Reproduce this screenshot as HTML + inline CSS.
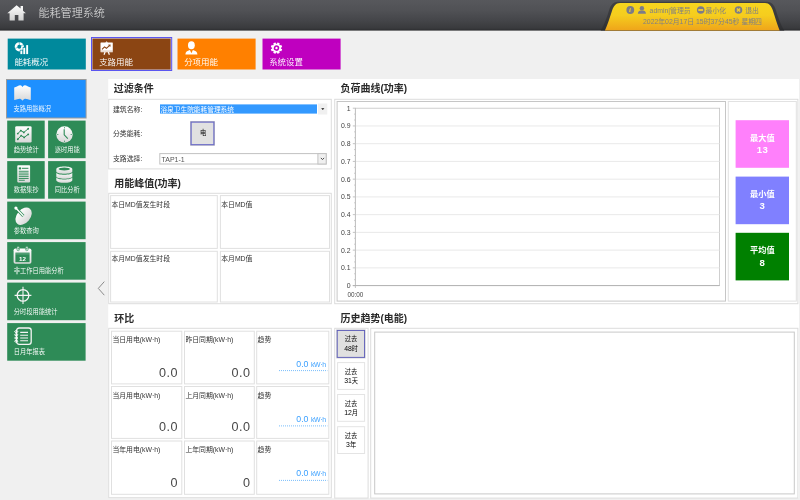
<!DOCTYPE html>
<html lang="zh-CN">
<head>
<meta charset="utf-8">
<title>能耗管理系统</title>
<style>
*{margin:0;padding:0;box-sizing:border-box;}
html,body{width:800px;height:500px;overflow:hidden;background:#f0f0f0;}
body{font-family:"Liberation Sans","Noto Sans CJK SC",sans-serif;color:#333;position:relative;}
#root{position:absolute;left:0;top:0;width:800px;height:500px;will-change:transform;}
.abs{position:absolute;}
.t{position:absolute;white-space:nowrap;line-height:1;}
/* header */
#hdr{left:0;top:0;width:800px;height:30.6px;background:linear-gradient(#57585c 0%,#505155 35%,#45464a 65%,#393a3d 92%,#2b2c2e 100%);}
#title{left:38.4px;top:8.3px;font-size:11.1px;color:#e4e4e4;font-weight:300;}
.ut{font-size:6.875px;color:#7f7f86;}
/* top tiles */
.tile{position:absolute;top:38.6px;width:78.1px;height:30.9px;color:#fff;}
.tile .t{left:6.7px;top:19.2px;font-size:8.45px;color:#fff;font-weight:350;}
.tile svg{position:absolute;left:6px;top:2.6px;}
/* sidebar */
.sb{position:absolute;background:#2e8b57;color:#fff;}
.sb .t{font-size:6.25px;color:#fff;left:6.6px;font-weight:350;}
.sb svg{position:absolute;}
/* panels */
#main{left:108.2px;top:79px;width:690.8px;height:419.2px;background:#fff;}
.h{font-size:10px;font-weight:bold;color:#2a2a2a;}
.grp{position:absolute;border:1px solid #e5e5e5;background:#fff;}
.box{position:absolute;border:1px solid #e9e9e9;background:#fff;}
.lbl{font-size:6.875px;color:#333;}
.big{font-size:12.6px;color:#484848;text-align:right;}
.blue{color:#3ba0ff;}
.btn{position:absolute;border:1px solid #ececec;background:#fff;font-size:6.25px;color:#222;text-align:center;line-height:10.2px;}
.ax{font-size:6.25px;color:#555;text-align:right;width:12px;}
</style>
</head>
<body>
<div id="root">
<svg class="abs" style="left:0;top:0" width="800" height="500" viewBox="0 0 800 500"><defs><linearGradient id="hdg" x1="0" y1="0" x2="0" y2="1"><stop offset="0" stop-color="#57585c"/><stop offset=".35" stop-color="#505155"/><stop offset=".65" stop-color="#45464a"/><stop offset=".92" stop-color="#393a3d"/><stop offset="1" stop-color="#2b2c2e"/></linearGradient></defs>
<rect x="0" y="0" width="800" height="30.6" fill="url(#hdg)"/>
<rect x="7.70" y="38.60" width="78.10" height="30.90" fill="#00899c"/>
<rect x="91.50" y="37.50" width="80.20" height="33.00" fill="#cfc8e8" stroke="#5a55f0" stroke-width="1"/>
<rect x="92.50" y="38.60" width="78.10" height="30.90" fill="#8b4513"/>
<rect x="177.50" y="38.60" width="78.10" height="30.90" fill="#ff8000"/>
<rect x="262.50" y="38.60" width="78.10" height="30.90" fill="#bf00bf"/>
<rect x="6.00" y="79.00" width="80.60" height="39.50" fill="#9a9a9a"/>
<rect x="7.00" y="80.00" width="78.60" height="37.50" fill="#1e90ff"/>
<rect x="7.20" y="120.60" width="37.50" height="37.60" fill="#2e8b57"/>
<rect x="48.10" y="120.60" width="37.50" height="37.60" fill="#2e8b57"/>
<rect x="7.20" y="161.10" width="37.50" height="37.60" fill="#2e8b57"/>
<rect x="48.10" y="161.10" width="37.50" height="37.60" fill="#2e8b57"/>
<rect x="7.20" y="201.60" width="78.40" height="37.60" fill="#2e8b57"/>
<rect x="7.20" y="242.10" width="78.40" height="37.60" fill="#2e8b57"/>
<rect x="7.20" y="282.60" width="78.40" height="37.60" fill="#2e8b57"/>
<rect x="7.20" y="323.10" width="78.40" height="37.60" fill="#2e8b57"/>
<rect x="108.2" y="79" width="690.8" height="419.2" fill="#fff"/>
<rect x="108.70" y="99.30" width="222.60" height="69.60" fill="#fff" stroke="#dcdcdc" stroke-width="1"/>
<rect x="160.00" y="104.40" width="157.00" height="9.20" fill="#3399ff"/>
<rect x="318.00" y="103.50" width="9.30" height="11.00" fill="#f0f0f0"/>
<rect x="190.10" y="121.10" width="24.80" height="24.60" fill="#b4b4c0"/>
<rect x="190.60" y="121.60" width="23.80" height="23.60" fill="#6c6cc8"/>
<rect x="191.70" y="122.70" width="21.60" height="21.40" fill="#e1e1e1"/>
<rect x="159.80" y="153.60" width="166.40" height="10.40" fill="#fff" stroke="#c2c2c2" stroke-width="1"/>
<rect x="317.90" y="153.60" width="8.30" height="10.40" fill="#f0f0f0" stroke="#c2c2c2" stroke-width="1"/>
<rect x="108.70" y="193.30" width="222.60" height="110.40" fill="#fff" stroke="#dcdcdc" stroke-width="1"/>
<rect x="110.60" y="195.60" width="106.70" height="52.80" fill="#fff" stroke="#e0e0e0" stroke-width="1"/>
<rect x="220.40" y="195.60" width="109.10" height="52.80" fill="#fff" stroke="#e0e0e0" stroke-width="1"/>
<rect x="110.60" y="251.30" width="106.70" height="50.70" fill="#fff" stroke="#e0e0e0" stroke-width="1"/>
<rect x="220.40" y="251.30" width="109.10" height="50.70" fill="#fff" stroke="#e0e0e0" stroke-width="1"/>
<rect x="108.70" y="328.30" width="222.60" height="169.40" fill="#fff" stroke="#dcdcdc" stroke-width="1"/>
<rect x="111.50" y="331.20" width="70.30" height="52.70" fill="#fff" stroke="#e0e0e0" stroke-width="1"/>
<rect x="184.50" y="331.20" width="69.80" height="52.70" fill="#fff" stroke="#e0e0e0" stroke-width="1"/>
<rect x="256.70" y="331.20" width="72.10" height="52.70" fill="#fff" stroke="#e0e0e0" stroke-width="1"/>
<path d="M279.00 370.60 L327.40 370.60" stroke="#79bdfb" stroke-width="1" stroke-dasharray="1 1" fill="none"/>
<rect x="111.50" y="386.50" width="70.30" height="51.90" fill="#fff" stroke="#e0e0e0" stroke-width="1"/>
<rect x="184.50" y="386.50" width="69.80" height="51.90" fill="#fff" stroke="#e0e0e0" stroke-width="1"/>
<rect x="256.70" y="386.50" width="72.10" height="51.90" fill="#fff" stroke="#e0e0e0" stroke-width="1"/>
<path d="M279.00 425.90 L327.40 425.90" stroke="#79bdfb" stroke-width="1" stroke-dasharray="1 1" fill="none"/>
<rect x="111.50" y="441.00" width="70.30" height="53.30" fill="#fff" stroke="#e0e0e0" stroke-width="1"/>
<rect x="184.50" y="441.00" width="69.80" height="53.30" fill="#fff" stroke="#e0e0e0" stroke-width="1"/>
<rect x="256.70" y="441.00" width="72.10" height="53.30" fill="#fff" stroke="#e0e0e0" stroke-width="1"/>
<path d="M279.00 480.40 L327.40 480.40" stroke="#79bdfb" stroke-width="1" stroke-dasharray="1 1" fill="none"/>
<rect x="334.70" y="99.30" width="463.20" height="204.40" fill="#fff" stroke="#dcdcdc" stroke-width="1"/>
<rect x="337.10" y="101.50" width="388.40" height="199.60" fill="#fff" stroke="#c6c6c6" stroke-width="1"/>
<rect x="728.30" y="101.50" width="68.00" height="199.60" fill="#fff" stroke="#e2e2e2" stroke-width="1"/>
<rect x="735.60" y="120.20" width="53.40" height="47.60" fill="#ff80fb"/>
<rect x="735.60" y="176.60" width="53.40" height="47.60" fill="#8080ff"/>
<rect x="735.60" y="232.80" width="53.40" height="47.60" fill="#008000"/>
<rect x="334.70" y="328.30" width="33.40" height="169.80" fill="#fff" stroke="#dcdcdc" stroke-width="1"/>
<rect x="370.70" y="328.30" width="427.20" height="169.80" fill="#fff" stroke="#dcdcdc" stroke-width="1"/>
<rect x="374.70" y="332.10" width="419.60" height="161.80" fill="#fff" stroke="#c8c8c8" stroke-width="1"/>
<rect x="336.20" y="329.40" width="29.40" height="29.00" fill="#c8c8d0"/>
<rect x="336.80" y="330.00" width="28.20" height="27.80" fill="#5c5cb8"/>
<rect x="337.70" y="330.90" width="26.40" height="26.00" fill="#e0e0e0"/>
<rect x="337.60" y="362.60" width="27.00" height="26.80" fill="#fff" stroke="#e4e4e4" stroke-width="1"/>
<rect x="337.60" y="394.50" width="27.00" height="26.80" fill="#fff" stroke="#e4e4e4" stroke-width="1"/>
<rect x="337.60" y="426.70" width="27.00" height="26.80" fill="#fff" stroke="#e4e4e4" stroke-width="1"/>
</svg>
<!-- HEADER -->
<svg class="abs" style="left:6px;top:4px" width="22" height="18" viewBox="0 0 22 18">
  <defs><linearGradient id="hg" x1="0" y1="0" x2="0" y2="1"><stop offset="0" stop-color="#ffffff"/><stop offset="1" stop-color="#d0d0d0"/></linearGradient></defs>
  <path d="M1.3 9.2 L10.6 1.2 L14.6 4.6 L14.6 2 L17 2 L17 6.7 L19.9 9.2 L17.6 9.2 L17.6 16.5 L12.4 16.5 L12.4 11 L8.8 11 L8.8 16.5 L3.6 16.5 L3.6 9.2 Z" fill="url(#hg)"/>
</svg>
<div id="title" class="t">能耗管理系统</div>
<!-- user tab -->
<svg class="abs" style="left:596px;top:0" width="190" height="31" viewBox="0 0 190 31">
  <defs>
    <linearGradient id="yg" x1="0" y1="0" x2="0" y2="1"><stop offset="0" stop-color="#f7d51e"/><stop offset="0.45" stop-color="#f5cd1e"/><stop offset="1" stop-color="#efa41a"/></linearGradient>
  </defs>
  <path d="M4.5 31 C9 24 11.6 15 13.2 10 C14.6 5.6 17 1.8 22 1.8 L171 1.8 C176 1.8 178.4 5.6 179.8 10 C181.4 15 184 24 188.5 31 Z" fill="#28282a" opacity=".5"/>
  <path d="M8.9 30.6 C12 24 14.6 15 16.2 10.2 C17.6 6.2 19.6 2.9 24 2.9 L169 2.9 C173.4 2.9 175.4 6.2 176.8 10.2 C178.4 15 181 24 183.7 30.6 Z" fill="url(#yg)"/>
  <!-- info icon -->
  <circle cx="34.3" cy="10" r="3.9" fill="#7c7c88"/>
  <text x="33.1" y="12.4" font-family="Liberation Serif,serif" font-style="italic" font-weight="bold" font-size="7" fill="#f5d030">i</text>
  <!-- user icon -->
  <circle cx="45.9" cy="8.3" r="2.2" fill="#7c7c88"/>
  <path d="M41.9 13.8 C41.9 11 44 10.6 45.9 10.6 C47.8 10.6 49.9 11 49.9 13.8 Z" fill="#7c7c88"/>
  <!-- minimize icon -->
  <circle cx="104.7" cy="10" r="3.8" fill="#7c7c88"/>
  <rect x="102.3" y="9.1" width="4.8" height="1.8" fill="#f5d030"/>
  <!-- exit icon -->
  <circle cx="142.5" cy="10" r="3.8" fill="#7c7c88"/>
  <path d="M140.9 8.4 L144.1 11.6 M144.1 8.4 L140.9 11.6" stroke="#f5d030" stroke-width="1.4"/>
</svg>
<div class="t ut" style="left:649.6px;top:7.5px">admin|管理员</div>
<div class="t ut" style="left:705.6px;top:7.5px">最小化</div>
<div class="t ut" style="left:745.2px;top:7.5px">退出</div>
<div class="t ut" style="left:643px;top:18.7px">2022年02月17日 15时37分45秒 星期四</div>
<!-- TOP TILES -->
<div class="tile" style="left:7.7px;background:#00899c;background:none">
  <svg width="16" height="14" viewBox="0 0 16 14"><circle cx="5.3" cy="5.8" r="3.3" fill="none" stroke="#fff" stroke-width="2.6"/><path d="M5.3 5.8 L5.3 .8 M5.3 5.8 L.6 7.6 M5.3 5.8 L9.8 3.4" stroke="#00899c" stroke-width=".5"/><g fill="#00899c"><rect x="5.8" y="8.8" width="3.1" height="5"/><rect x="8.7" y="6.1" width="3.1" height="7.5"/><rect x="11.6" y="3.4" width="3.1" height="10"/></g><g fill="#fff"><rect x="6.4" y="9.5" width="1.9" height="3.6"/><rect x="9.3" y="6.8" width="1.9" height="6.3"/><rect x="12.2" y="4.1" width="1.9" height="9"/></g></svg>
  <div class="t">能耗概况</div>
</div>
<div class="tile" style="left:92.5px;background:#8b4513;background:none">
  <svg width="16" height="15" viewBox="0 0 16 15"><rect x="1.5" y="1.6" width="12.3" height="9.7" rx=".5" fill="#fff"/><path d="M6.2 1.8 L7.6 .3 L9 1.8Z" fill="#fff"/><path d="M1.5 10.1 L13.8 10.1" stroke="#8b4513" stroke-width=".5" opacity=".7"/><path d="M6.1 11 L5 13.7 M9.3 11 L10.4 13.7" stroke="#fff" stroke-width="1.2" fill="none"/><path d="M3 8.4 L5.5 5.9 L7.4 7.3 L10.4 4.6" stroke="#8b4513" stroke-width="1.1" fill="none"/><path d="M8.9 3.7 L11.6 3.4 L11.3 6.1Z" fill="#8b4513"/></svg>
  <div class="t">支路用能</div>
</div>
<div class="tile" style="left:177.5px;background:#ff8000;background:none">
  <svg width="16" height="15" viewBox="0 0 16 15"><ellipse cx="7.4" cy="4.3" rx="3.4" ry="4" fill="#fff"/><path d="M1.4 13.5 C1.4 10.8 3.2 10.2 5.9 9.1 L7.4 12.2 L8.9 9.1 C11.6 10.2 13.4 10.8 13.4 13.5 Z" fill="#fff"/></svg>
  <div class="t">分项用能</div>
</div>
<div class="tile" style="left:262.5px;background:#bf00bf;background:none">
  <svg width="16" height="15" viewBox="0 0 16 15"><g transform="translate(7.5,7.1) rotate(22.5)"><g fill="#fff"><rect x="-1.25" y="-5.7" width="2.5" height="11.4" rx=".4"/><rect x="-1.25" y="-5.7" width="2.5" height="11.4" rx=".4" transform="rotate(45)"/><rect x="-1.25" y="-5.7" width="2.5" height="11.4" rx=".4" transform="rotate(90)"/><rect x="-1.25" y="-5.7" width="2.5" height="11.4" rx=".4" transform="rotate(135)"/><circle r="4.4"/></g><circle r="2.7" fill="#bf00bf"/><circle r="1.2" fill="#fff"/></g></svg>
  <div class="t">系统设置</div>
</div>
<!-- SIDEBAR -->
<div class="sb" style="left:7px;top:80px;width:78.6px;height:37.5px;background:#1e90ff;background:none">
  <svg style="left:7.1px;top:5px" width="17" height="16" viewBox="0 0 17 16"><defs><linearGradient id="ig" x1="0" y1="0" x2="0" y2="1"><stop offset="0" stop-color="#fff"/><stop offset="1" stop-color="#d8d8d8"/></linearGradient></defs><path d="M.2 2.4 C2.4 2 4.6 .2 6.2 .2 C7.2 .2 8 1.2 8.5 2 C9 1.2 9.8 .2 10.8 .2 C12.4 .2 14.6 2 16.8 2.4 L16.8 15 C14.6 15 12.6 13.6 11 13.8 C10 13.9 9.2 14.8 8.5 15.8 C7.8 14.8 7 13.9 6 13.8 C4.4 13.6 2.4 15 .2 15 Z" fill="url(#ig)"/></svg>
  <div class="t" style="top:26.2px">支路用能概况</div>
</div>
<!-- green tiles -->
<div class="sb" style="left:7.2px;top:120.6px;width:37.5px;height:37.6px;background:none">
  <svg style="left:7.5px;top:5.1px" width="17" height="17" viewBox="0 0 17 17"><rect x=".2" y=".2" width="16.4" height="16.4" rx="1.4" fill="url(#ig)"/><path d="M2.8 7.6 L5.8 4.6 L8.8 6.4 L13.2 2.8 M2.8 13.2 L6.2 9.6 L9.2 11.4 L13.2 8.4" stroke="#2e8b57" stroke-width="1" fill="none"/><g fill="#2e8b57"><circle cx="2.8" cy="7.6" r=".95"/><circle cx="5.8" cy="4.6" r=".95"/><circle cx="8.8" cy="6.4" r=".95"/><circle cx="13.2" cy="2.8" r=".95"/><circle cx="2.8" cy="13.2" r=".95"/><circle cx="6.2" cy="9.6" r=".95"/><circle cx="9.2" cy="11.4" r=".95"/><circle cx="13.2" cy="8.4" r=".95"/></g></svg>
  <div class="t" style="top:26.1px">趋势统计</div>
</div>
<div class="sb" style="left:48.1px;top:120.6px;width:37.5px;height:37.6px;background:none">
  <svg style="left:7.7px;top:5.1px" width="17" height="17" viewBox="0 0 17 17"><circle cx="8.5" cy="8.5" r="8.2" fill="url(#ig)"/><path d="M8.2 3.2 L8.2 8.8 L11.8 12.6" stroke="#2e8b57" stroke-width="1.1" fill="none"/><g fill="#2e8b57"><rect x="8" y="1" width=".7" height="1.4"/><rect x="8" y="14.6" width=".7" height="1.4"/><rect x="1" y="8.1" width="1.4" height=".7"/><rect x="14.6" y="8.1" width="1.4" height=".7"/></g></svg>
  <div class="t" style="top:26.1px">逐时用能</div>
</div>
<div class="sb" style="left:7.2px;top:161.1px;width:37.5px;height:37.6px;background:none">
  <svg style="left:9.4px;top:4.4px" width="14" height="18" viewBox="0 0 14 18"><rect x=".3" y=".2" width="12.8" height="17.2" rx=".8" fill="url(#ig)"/><g fill="#2e8b57"><rect x="1.8" y="2.4" width="2.2" height="2"/><rect x="4.8" y="2.8" width="6.6" height="1"/><rect x="1.8" y="5.8" width="9.8" height=".9"/><rect x="1.8" y="7.6" width="9.8" height=".9"/><rect x="1.8" y="9.4" width="9.8" height=".9"/><rect x="1.8" y="11.2" width="9.8" height=".9"/><rect x="1.8" y="13" width="9.8" height=".9"/><rect x="1.8" y="14.8" width="6" height=".9"/></g></svg>
  <div class="t" style="top:26.1px">数据集抄</div>
</div>
<div class="sb" style="left:48.1px;top:161.1px;width:37.5px;height:37.6px;background:none">
  <svg style="left:7.6px;top:5px" width="17" height="17" viewBox="0 0 17 17"><g fill="url(#ig)"><path d="M.3 3 C.3 -.5 16.3 -.5 16.3 3 L16.3 5.6 C16.3 8.6 .3 8.6 .3 5.6 Z"/><path d="M.3 6.5 C.3 9.5 16.3 9.5 16.3 6.5 L16.3 10.4 C16.3 13.4 .3 13.4 .3 10.4 Z"/><path d="M.3 11.3 C.3 14.3 16.3 14.3 16.3 11.3 L16.3 14.2 C16.3 17.6 .3 17.6 .3 14.2 Z"/></g><ellipse cx="8.3" cy="3" rx="5.7" ry="1.5" fill="#2e8b57"/></svg>
  <div class="t" style="top:26.1px">同比分析</div>
</div>
<div class="sb" style="left:7.2px;top:201.6px;width:78.4px;height:37.6px;background:none">
  <svg style="left:6.6px;top:4px" width="19" height="19" viewBox="0 0 19 19"><g transform="rotate(-50 9.6 10.2)"><ellipse cx="9.6" cy="10.2" rx="9.8" ry="6.7" fill="url(#ig)"/></g><path d="M1.8 2 L9.4 10" stroke="#2e8b57" stroke-width="2.8"/><path d="M1.8 2 L9.4 10" stroke="#fff" stroke-width="1.3"/><circle cx="1.9" cy="2.1" r="1.6" fill="#fff"/></svg>
  <div class="t" style="top:26.1px">参数查询</div>
</div>
<div class="sb" style="left:7.2px;top:242.1px;width:78.4px;height:37.6px;background:none">
  <svg style="left:6.3px;top:3.9px" width="19" height="19" viewBox="0 0 19 19"><rect x=".6" y="2.4" width="17.8" height="15.4" rx="1.8" fill="url(#ig)"/><rect x="2.4" y="6.6" width="14.2" height="9.6" fill="#2e8b57"/><path d="M2.4 7.9 L16.6 7.9" stroke="#fff" stroke-width=".5" opacity=".55"/><rect x="3.9" y=".5" width="2.6" height="4.2" rx="1.2" fill="#fff" stroke="#2e8b57" stroke-width=".6"/><rect x="12.5" y=".5" width="2.6" height="4.2" rx="1.2" fill="#fff" stroke="#2e8b57" stroke-width=".6"/><rect x="4.7" y="1.6" width="1" height="2" fill="#2e8b57"/><rect x="13.3" y="1.6" width="1" height="2" fill="#2e8b57"/><text x="9.5" y="14.6" text-anchor="middle" font-family="Liberation Sans,sans-serif" font-weight="bold" font-size="6.2" fill="#fff">12</text></svg>
  <div class="t" style="top:26.1px">非工作日用能分析</div>
</div>
<div class="sb" style="left:7.2px;top:282.6px;width:78.4px;height:37.6px;background:none">
  <svg style="left:7.2px;top:3.8px" width="18" height="18" viewBox="0 0 18 18"><circle cx="9" cy="9.4" r="5.8" fill="none" stroke="#f4f4f4" stroke-width="1.3"/><path d="M9 .8 L9 18 M.6 9.4 L17.4 9.4" stroke="#f4f4f4" stroke-width="1.1"/></svg>
  <div class="t" style="top:26.1px">分时段用能统计</div>
</div>
<div class="sb" style="left:7.2px;top:323.1px;width:78.4px;height:37.6px;background:none">
  <svg style="left:6.4px;top:4px" width="19" height="19" viewBox="0 0 19 19"><rect x="2.6" y="1" width="14.6" height="16.4" rx="2.6" fill="none" stroke="#f4f4f4" stroke-width="1.3"/><path d="M6.2 5.4 L14 5.4 M6.2 8.2 L14 8.2 M6.2 11 L14 11 M6.2 13.8 L14 13.8" stroke="#f4f4f4" stroke-width="1.1"/><g fill="none" stroke="#fff" stroke-width=".9"><ellipse cx="2.2" cy="4.6" rx="1.6" ry=".9"/><ellipse cx="2.2" cy="7.8" rx="1.6" ry=".9"/><ellipse cx="2.2" cy="11" rx="1.6" ry=".9"/><ellipse cx="2.2" cy="14.2" rx="1.6" ry=".9"/></g></svg>
  <div class="t" style="top:26.1px">日月年报表</div>
</div>
<!-- collapse chevron -->
<svg class="abs" style="left:96px;top:280px" width="10" height="18" viewBox="0 0 10 18"><path d="M8.3 1.6 L2.3 8.4 L8.3 15.2" fill="none" stroke="#8a8a8a" stroke-width="1"/></svg>
<!-- MAIN -->
<div class="t h" style="left:113.8px;top:84.3px">过滤条件</div>
<div class="t h" style="left:340.4px;top:84.3px">负荷曲线(功率)</div>
<div class="t h" style="left:114.2px;top:178.9px">用能峰值(功率)</div>
<div class="t h" style="left:114.2px;top:313.5px">环比</div>
<div class="t h" style="left:340.4px;top:313.5px">历史趋势(电能)</div>
<!-- filter group -->
<div class="t lbl" style="left:113px;top:106.8px">建筑名称:</div>
<div class="t lbl" style="left:160.4px;top:106.7px;color:#fff;font-size:6.7px">浴泉卫生院能耗管理系统</div>
<svg class="abs" style="left:320px;top:107px" width="6" height="5" viewBox="0 0 6 5"><path d="M1.2 1.2 L4.4 1.2 L2.8 3.1Z" fill="#111"/></svg>
<div class="t lbl" style="left:113px;top:131.3px">分类能耗:</div>
<div class="t" style="left:199.9px;top:130px;font-size:6.25px;color:#111;font-weight:500">电</div>
<div class="t lbl" style="left:113px;top:156.4px">支路选择:</div>
<svg class="abs" style="left:319.8px;top:157px" width="5" height="4" viewBox="0 0 5 4"><path d="M.9 .9 L2.5 2.6 L4.1 .9" fill="none" stroke="#505050" stroke-width="1"/></svg>
<div class="t" style="left:161.5px;top:156.2px;font-size:7px;color:#555">TAP1-1</div>
<!-- peak group -->
<div class="t lbl" style="left:111.4px;top:201.6px">本日MD值发生时段</div>
<div class="t lbl" style="left:221.2px;top:201.6px">本日MD值</div>
<div class="t lbl" style="left:111.4px;top:256.4px">本月MD值发生时段</div>
<div class="t lbl" style="left:221.2px;top:256.4px">本月MD值</div>
<!-- ratio group -->
<div class="t lbl" style="left:112.4px;top:337.3px">当日用电(kW·h)</div>
<div class="t big" style="left:111.0px;width:67.0px;top:366.8px;letter-spacing:.5px">0.0</div>
<div class="t lbl" style="left:185.4px;top:337.3px">昨日同期(kW·h)</div>
<div class="t big" style="left:184.0px;width:66.5px;top:366.8px;letter-spacing:.5px">0.0</div>
<div class="t lbl" style="left:257.6px;top:337.3px">趋势</div>
<div class="t blue" style="left:256.2px;width:69.6px;text-align:right;top:359.6px;font-size:8.75px">0.0 <span style="font-size:6.9px;letter-spacing:-.3px">kW·h</span></div>
<div class="t lbl" style="left:112.4px;top:392.6px">当月用电(kW·h)</div>
<div class="t big" style="left:111.0px;width:67.0px;top:421.3px;letter-spacing:.5px">0.0</div>
<div class="t lbl" style="left:185.4px;top:392.6px">上月同期(kW·h)</div>
<div class="t big" style="left:184.0px;width:66.5px;top:421.3px;letter-spacing:.5px">0.0</div>
<div class="t lbl" style="left:257.6px;top:392.6px">趋势</div>
<div class="t blue" style="left:256.2px;width:69.6px;text-align:right;top:414.9px;font-size:8.75px">0.0 <span style="font-size:6.9px;letter-spacing:-.3px">kW·h</span></div>
<div class="t lbl" style="left:112.4px;top:447.1px">当年用电(kW·h)</div>
<div class="t big" style="left:111.0px;width:67.0px;top:477.2px;letter-spacing:.5px">0</div>
<div class="t lbl" style="left:185.4px;top:447.1px">上年同期(kW·h)</div>
<div class="t big" style="left:184.0px;width:66.5px;top:477.2px;letter-spacing:.5px">0</div>
<div class="t lbl" style="left:257.6px;top:447.1px">趋势</div>
<div class="t blue" style="left:256.2px;width:69.6px;text-align:right;top:469.4px;font-size:8.75px">0.0 <span style="font-size:6.9px;letter-spacing:-.3px">kW·h</span></div>
<!-- load chart -->
<svg class="abs" style="left:337px;top:101px" width="389" height="200" viewBox="0 0 389 200">
<rect x="18.4" y="7.2" width="364.2" height="177.4" fill="#fff" stroke="#c4c4c4" stroke-width="0.8"/>
<path d="M18.4 24.94 L382.6 24.94" stroke="#e6e6e6" stroke-width="0.9"/>
<path d="M18.4 42.68 L382.6 42.68" stroke="#e6e6e6" stroke-width="0.9"/>
<path d="M18.4 60.42 L382.6 60.42" stroke="#e6e6e6" stroke-width="0.9"/>
<path d="M18.4 78.16 L382.6 78.16" stroke="#e6e6e6" stroke-width="0.9"/>
<path d="M18.4 95.90 L382.6 95.90" stroke="#e6e6e6" stroke-width="0.9"/>
<path d="M18.4 113.64 L382.6 113.64" stroke="#e6e6e6" stroke-width="0.9"/>
<path d="M18.4 131.38 L382.6 131.38" stroke="#e6e6e6" stroke-width="0.9"/>
<path d="M18.4 149.12 L382.6 149.12" stroke="#e6e6e6" stroke-width="0.9"/>
<path d="M18.4 166.86 L382.6 166.86" stroke="#e6e6e6" stroke-width="0.9"/>
<path d="M15.8 7.20 L18.4 7.20" stroke="#aaa" stroke-width="0.7"/>
<text x="13.5" y="9.60" text-anchor="end" font-family="Liberation Sans,sans-serif" font-size="6.9" fill="#444">1</text>
<path d="M17.0 13.11 L18.4 13.11" stroke="#bbb" stroke-width="0.7"/>
<path d="M17.0 19.03 L18.4 19.03" stroke="#bbb" stroke-width="0.7"/>
<path d="M15.8 24.94 L18.4 24.94" stroke="#aaa" stroke-width="0.7"/>
<text x="13.5" y="27.34" text-anchor="end" font-family="Liberation Sans,sans-serif" font-size="6.9" fill="#444">0.9</text>
<path d="M17.0 30.85 L18.4 30.85" stroke="#bbb" stroke-width="0.7"/>
<path d="M17.0 36.77 L18.4 36.77" stroke="#bbb" stroke-width="0.7"/>
<path d="M15.8 42.68 L18.4 42.68" stroke="#aaa" stroke-width="0.7"/>
<text x="13.5" y="45.08" text-anchor="end" font-family="Liberation Sans,sans-serif" font-size="6.9" fill="#444">0.8</text>
<path d="M17.0 48.59 L18.4 48.59" stroke="#bbb" stroke-width="0.7"/>
<path d="M17.0 54.51 L18.4 54.51" stroke="#bbb" stroke-width="0.7"/>
<path d="M15.8 60.42 L18.4 60.42" stroke="#aaa" stroke-width="0.7"/>
<text x="13.5" y="62.82" text-anchor="end" font-family="Liberation Sans,sans-serif" font-size="6.9" fill="#444">0.7</text>
<path d="M17.0 66.33 L18.4 66.33" stroke="#bbb" stroke-width="0.7"/>
<path d="M17.0 72.25 L18.4 72.25" stroke="#bbb" stroke-width="0.7"/>
<path d="M15.8 78.16 L18.4 78.16" stroke="#aaa" stroke-width="0.7"/>
<text x="13.5" y="80.56" text-anchor="end" font-family="Liberation Sans,sans-serif" font-size="6.9" fill="#444">0.6</text>
<path d="M17.0 84.07 L18.4 84.07" stroke="#bbb" stroke-width="0.7"/>
<path d="M17.0 89.99 L18.4 89.99" stroke="#bbb" stroke-width="0.7"/>
<path d="M15.8 95.90 L18.4 95.90" stroke="#aaa" stroke-width="0.7"/>
<text x="13.5" y="98.30" text-anchor="end" font-family="Liberation Sans,sans-serif" font-size="6.9" fill="#444">0.5</text>
<path d="M17.0 101.81 L18.4 101.81" stroke="#bbb" stroke-width="0.7"/>
<path d="M17.0 107.73 L18.4 107.73" stroke="#bbb" stroke-width="0.7"/>
<path d="M15.8 113.64 L18.4 113.64" stroke="#aaa" stroke-width="0.7"/>
<text x="13.5" y="116.04" text-anchor="end" font-family="Liberation Sans,sans-serif" font-size="6.9" fill="#444">0.4</text>
<path d="M17.0 119.55 L18.4 119.55" stroke="#bbb" stroke-width="0.7"/>
<path d="M17.0 125.47 L18.4 125.47" stroke="#bbb" stroke-width="0.7"/>
<path d="M15.8 131.38 L18.4 131.38" stroke="#aaa" stroke-width="0.7"/>
<text x="13.5" y="133.78" text-anchor="end" font-family="Liberation Sans,sans-serif" font-size="6.9" fill="#444">0.3</text>
<path d="M17.0 137.29 L18.4 137.29" stroke="#bbb" stroke-width="0.7"/>
<path d="M17.0 143.21 L18.4 143.21" stroke="#bbb" stroke-width="0.7"/>
<path d="M15.8 149.12 L18.4 149.12" stroke="#aaa" stroke-width="0.7"/>
<text x="13.5" y="151.52" text-anchor="end" font-family="Liberation Sans,sans-serif" font-size="6.9" fill="#444">0.2</text>
<path d="M17.0 155.03 L18.4 155.03" stroke="#bbb" stroke-width="0.7"/>
<path d="M17.0 160.95 L18.4 160.95" stroke="#bbb" stroke-width="0.7"/>
<path d="M15.8 166.86 L18.4 166.86" stroke="#aaa" stroke-width="0.7"/>
<text x="13.5" y="169.26" text-anchor="end" font-family="Liberation Sans,sans-serif" font-size="6.9" fill="#444">0.1</text>
<path d="M17.0 172.77 L18.4 172.77" stroke="#bbb" stroke-width="0.7"/>
<path d="M17.0 178.69 L18.4 178.69" stroke="#bbb" stroke-width="0.7"/>
<path d="M15.8 184.60 L18.4 184.60" stroke="#aaa" stroke-width="0.7"/>
<text x="13.5" y="187.00" text-anchor="end" font-family="Liberation Sans,sans-serif" font-size="6.9" fill="#444">0</text>
<path d="M18.4 7.2 L18.4 187.0" stroke="#c0c0c0" stroke-width="0.9"/>
<path d="M15.8 184.6 L382.6 184.6" stroke="#b0b0b0" stroke-width="0.9"/>
<text x="18.4" y="195.6" text-anchor="middle" font-family="Liberation Sans,sans-serif" font-size="6.4" fill="#444">00:00</text>
</svg>
<div class="t" style="left:735.6px;width:53.4px;text-align:center;top:134.7px;font-size:8.2px;color:#fff;font-weight:bold">最大值</div>
<div class="t" style="left:735.6px;width:53.4px;text-align:center;top:145.0px;font-size:9.6px;color:#fff;font-weight:bold;letter-spacing:.5px;padding-left:.5px">13</div>
<div class="t" style="left:735.6px;width:53.4px;text-align:center;top:191.1px;font-size:8.2px;color:#fff;font-weight:bold">最小值</div>
<div class="t" style="left:735.6px;width:53.4px;text-align:center;top:201.4px;font-size:9.6px;color:#fff;font-weight:bold;letter-spacing:.5px;padding-left:.5px">3</div>
<div class="t" style="left:735.6px;width:53.4px;text-align:center;top:247.3px;font-size:8.2px;color:#fff;font-weight:bold">平均值</div>
<div class="t" style="left:735.6px;width:53.4px;text-align:center;top:257.6px;font-size:9.6px;color:#fff;font-weight:bold;letter-spacing:.5px;padding-left:.5px">8</div>
<!-- history -->
<div class="t" style="left:337.1px;width:28px;text-align:center;top:336.3px;font-size:6.25px;color:#000">过去</div>
<div class="t" style="left:337.1px;width:28px;text-align:center;top:345.9px;font-size:6.25px;color:#000"><span style="font-size:6.9px">48</span>时</div>
<div class="t" style="left:337.1px;width:28px;text-align:center;top:368.7px;font-size:6.25px;color:#000">过去</div>
<div class="t" style="left:337.1px;width:28px;text-align:center;top:378.3px;font-size:6.25px;color:#000"><span style="font-size:6.9px">31</span>天</div>
<div class="t" style="left:337.1px;width:28px;text-align:center;top:400.6px;font-size:6.25px;color:#000">过去</div>
<div class="t" style="left:337.1px;width:28px;text-align:center;top:410.2px;font-size:6.25px;color:#000"><span style="font-size:6.9px">12</span>月</div>
<div class="t" style="left:337.1px;width:28px;text-align:center;top:432.8px;font-size:6.25px;color:#000">过去</div>
<div class="t" style="left:337.1px;width:28px;text-align:center;top:442.4px;font-size:6.25px;color:#000"><span style="font-size:6.9px">3</span>年</div>
</div>
</body>
</html>
